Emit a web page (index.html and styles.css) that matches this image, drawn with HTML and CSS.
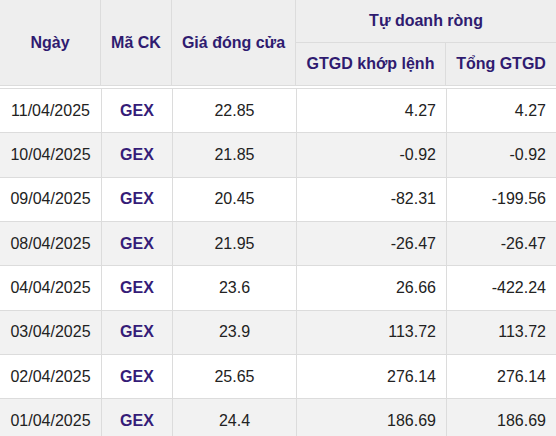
FILE: index.html
```html
<!DOCTYPE html>
<html lang="vi">
<head>
<meta charset="utf-8">
<link rel="stylesheet" href="styles.css">
</head>
<body>
<div class="wrap">
  <table class="head">
    <colgroup>
      <col class="h1"><col class="h2"><col class="h3"><col class="h4"><col class="h5">
    </colgroup>
    <thead>
      <tr class="r1">
        <th rowspan="2">Ngày</th>
        <th rowspan="2">Mã CK</th>
        <th rowspan="2">Giá đóng cửa</th>
        <th colspan="2" class="grp">Tự doanh ròng</th>
      </tr>
      <tr class="r2">
        <th>GTGD khớp lệnh</th>
        <th>Tổng GTGD</th>
      </tr>
    </thead>
  </table>
  <table class="body">
    <colgroup>
      <col class="b1"><col class="b2"><col class="b3"><col class="b4"><col class="b5">
    </colgroup>
    <tbody>
      <tr><td>11/04/2025</td><td class="code">GEX</td><td>22.85</td><td class="num">4.27</td><td class="num">4.27</td></tr>
      <tr><td>10/04/2025</td><td class="code">GEX</td><td>21.85</td><td class="num">-0.92</td><td class="num">-0.92</td></tr>
      <tr><td>09/04/2025</td><td class="code">GEX</td><td>20.45</td><td class="num">-82.31</td><td class="num">-199.56</td></tr>
      <tr><td>08/04/2025</td><td class="code">GEX</td><td>21.95</td><td class="num">-26.47</td><td class="num">-26.47</td></tr>
      <tr><td>04/04/2025</td><td class="code">GEX</td><td>23.6</td><td class="num">26.66</td><td class="num">-422.24</td></tr>
      <tr><td>03/04/2025</td><td class="code">GEX</td><td>23.9</td><td class="num">113.72</td><td class="num">113.72</td></tr>
      <tr><td>02/04/2025</td><td class="code">GEX</td><td>25.65</td><td class="num">276.14</td><td class="num">276.14</td></tr>
      <tr><td>01/04/2025</td><td class="code">GEX</td><td>24.4</td><td class="num">186.69</td><td class="num">186.69</td></tr>
    </tbody>
  </table>
</div>
</body>
</html>
```

FILE: styles.css
```css
html, body {
  margin: 0;
  padding: 0;
  background: #ffffff;
}

.wrap {
  width: 556px;
  overflow: hidden;
  font-family: "Liberation Sans", Arial, sans-serif;
  font-size: 16px;
  color: #222222;
}

table {
  border-collapse: separate;
  border-spacing: 0;
  table-layout: fixed;
  width: 556px;
}

.h1 { width: 101px; }
.h2 { width: 71px; }
.h3 { width: 124px; }
.h4 { width: 150px; }
.h5 { width: 110px; }

.b1 { width: 102px; }
.b2 { width: 71px; }
.b3 { width: 124px; }
.b4 { width: 150px; }
.b5 { width: 109px; }

.head th {
  background: #eeeeee;
  color: #2f1b70;
  font-weight: bold;
  text-align: center;
  vertical-align: middle;
  border-right: 1px solid #dcdcdc;
  border-bottom: 1px solid #dcdcdc;
  padding: 0;
  line-height: 18px;
}

.head th:last-child { border-right: none; }
.head .r1 th.grp { border-right: none; }

.head .r1 th { height: 42px; }
.head .r2 th { height: 42px; }

.body {
  margin-top: 2px;
  border-top: 1px solid #dcdcdc;
}

.body td {
  height: 44.33px;
  padding: 0 10px;
  line-height: 18px;
  text-align: center;
  vertical-align: middle;
  border-right: 1px solid #dcdcdc;
  border-bottom: 1px solid #dcdcdc;
  white-space: nowrap;
  box-sizing: border-box;
}

.body td:last-child { border-right: none; }

.body tr:nth-child(even) td { background: #f2f2f2; }

.body td.num { text-align: right; }

.body td.code {
  font-weight: bold;
  color: #351c78;
}
```
